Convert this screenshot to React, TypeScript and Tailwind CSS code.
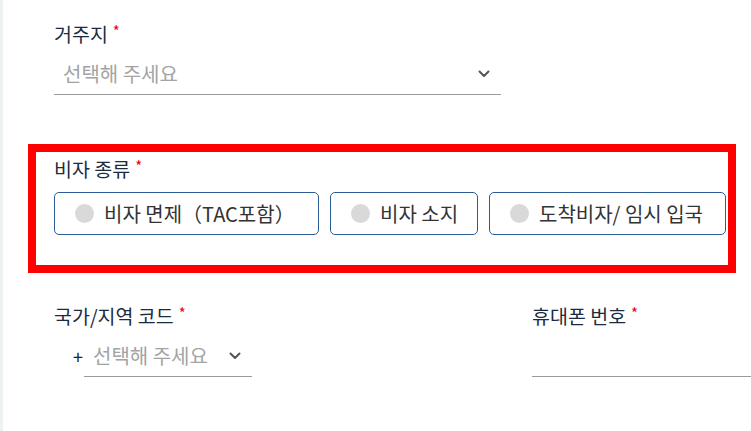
import React from "react";

const font = { fontFamily: '"Noto Sans CJK KR", "Noto Sans", sans-serif' };

function Chevron() {
  return (
    <svg width="12" height="8" viewBox="0 0 12 8" className="shrink-0">
      <path d="M1.5 1.5 L6 6 L10.5 1.5" fill="none" stroke="#555" strokeWidth="2" strokeLinecap="round" strokeLinejoin="round" />
    </svg>
  );
}

function Label({ text }: { text: string }) {
  return (
    <div className="h-[24px] flex items-center text-[19.5px] text-[#1b2c40] leading-[24px]">
      <span>{text}</span>
      <span className="ml-[5px] text-[15px] text-[#f00000] self-start leading-[18px]">*</span>
    </div>
  );
}

function Select({ className = "" }: { className?: string }) {
  return (
    <div className={`h-[41px] border-b border-[#9a9a9a] flex items-center justify-between pl-[9px] pr-[11px] ${className}`}>
      <span className="text-[20px] text-[#a3a3a3] whitespace-nowrap">선택해 주세요</span>
      <Chevron />
    </div>
  );
}

function VisaOption({ text, className }: { text: string; className: string }) {
  return (
    <button className={`h-[43px] flex items-center gap-[10px] pl-[20px] border border-[#2a5d94] rounded-[5px] bg-white ${className}`}>
      <span className="w-[19px] h-[19px] rounded-full bg-[#d9d9d9] shrink-0" />
      <span className="text-[20px] text-[#333] whitespace-nowrap">{text}</span>
    </button>
  );
}

export default function App() {
  return (
    <div className="w-[751px] h-[431px] bg-white flex overflow-hidden" style={font}>
      <div className="w-[3px] shrink-0 bg-[#eef1f1]" />
      <div className="flex-1 pl-[25px] flex flex-col">
        <div className="ml-[26px] w-[447px] mt-[22px]">
          <Label text="거주지" />
          <Select className="mt-[8px]" />
        </div>

        <div className="mt-[49px] w-[708px] border-[8px] border-[#ff0000] pl-[18px] pr-[2px] pt-[5px] pb-[30px]">
          <Label text="비자 종류" />
          <div className="mt-[11px] flex gap-[11px]">
            <VisaOption text="비자 면제（TAC포함）" className="w-[265px]" />
            <VisaOption text="비자 소지" className="w-[148px]" />
            <VisaOption text="도착비자/ 임시 입국" className="w-[237px]" />
          </div>
        </div>

        <div className="ml-[26px] mt-[31px] flex">
          <div className="w-[198px]">
            <Label text="국가/지역 코드" />
            <div className="mt-[8px] flex items-center">
              <span className="w-[30px] pl-[19px] text-[18px] text-[#222]">+</span>
              <Select className="w-[168px]" />
            </div>
          </div>
          <div className="ml-[280px] w-[240px]">
            <Label text="휴대폰 번호" />
            <div className="mt-[8px] h-[41px] border-b border-[#9a9a9a]" />
          </div>
        </div>
      </div>
    </div>
  );
}
